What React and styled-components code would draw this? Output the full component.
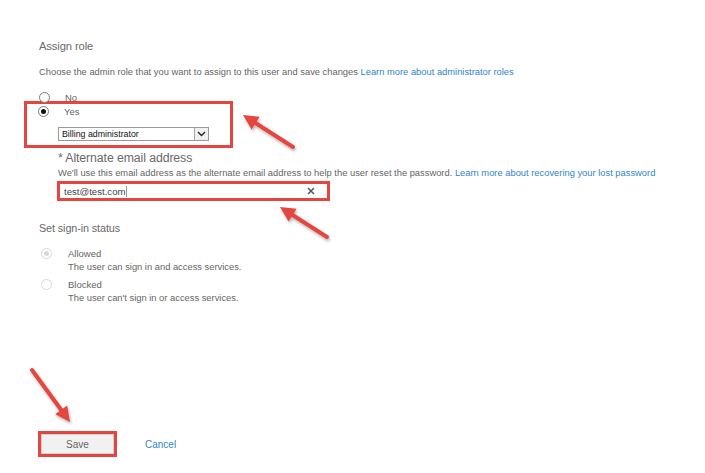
import styled, { createGlobalStyle } from "styled-components"

const GlobalStyle = createGlobalStyle`
  html, body { margin: 0; padding: 0; background: #fff; }
  body { font-family: "Liberation Sans", Arial, sans-serif; }
`

const Page = styled.div`
  position: relative;
  width: 705px;
  height: 473px;
  overflow: hidden;
  box-sizing: border-box;
  padding: 38px 0 0 39px;
  color: #666;
`

const Heading = styled.div`
  font-size: ${(p) => p.$size || "11.2px"};
  line-height: 16px;
  color: #6a6a6a;
  letter-spacing: -0.1px;
  margin-top: ${(p) => p.$top || "0"};
`

const Text = styled.div`
  font-size: 9.35px;
  line-height: 12px;
  color: #666;
  white-space: nowrap;
  margin-top: ${(p) => p.$top || "0"};
  padding-left: ${(p) => p.$indent || "0"};
`

const Link = styled.a`
  color: #2f86c9;
  text-decoration: none;
`

const Row = styled.div`
  display: flex;
  align-items: center;
  height: ${(p) => p.$h || "12px"};
  margin-top: ${(p) => p.$top || "0"};
  padding-left: ${(p) => p.$indent || "0"};
  gap: ${(p) => p.$gap || "15px"};
  font-size: 9.5px;
  color: #666;
`

const Radio = styled.span`
  box-sizing: border-box;
  width: 11px;
  height: 11px;
  border-radius: 50%;
  border: 1px solid ${(p) => (p.$disabled ? "#d6d6d6" : "#7a7a7a")};
  background: #fff;
  display: flex;
  align-items: center;
  justify-content: center;
  flex: none;

  &::after {
    content: "";
    width: 5px;
    height: 5px;
    border-radius: 50%;
    background: ${(p) => (p.$disabled ? "#d8d8d8" : "#111")};
    display: ${(p) => (p.$checked ? "block" : "none")};
  }
`

const Highlight = styled.div`
  box-sizing: border-box;
  border: 3px solid #e4463f;
  width: ${(p) => p.$w};
  margin-left: ${(p) => p.$left || "0"};
  margin-top: ${(p) => p.$top || "0"};
`

const RoleBox = styled(Highlight)`
  padding: 0 0 4px 11px;
`

const Select = styled.div`
  box-sizing: border-box;
  width: 151px;
  height: 14px;
  margin: 9px 0 0 20px;
  border: 1px solid #9a9a9a;
  background: #fff;
  display: flex;
  align-items: center;
  font-size: 8.8px;
  color: #111;
`

const SelectValue = styled.span`
  flex: 1;
  padding-left: 3px;
`

const SelectButton = styled.span`
  box-sizing: border-box;
  width: 14px;
  height: 12px;
  border-left: 1px solid #a8a8a8;
  background: #f0f0f0;
  display: flex;
  align-items: center;
  justify-content: center;
`

const EmailSection = styled.div`
  padding-left: 19px;
  margin-top: 2px;
`

const InputBox = styled(Highlight)`
  height: 20px;
  margin-left: -1px;
  display: flex;
  align-items: center;
  padding: 0 12px 0 4px;
  font-size: 9.6px;
  color: #444;
`

const InputValue = styled.span`
  flex: 1;
  display: flex;
  align-items: center;
`

const Caret = styled.span`
  width: 1px;
  height: 11px;
  background: #999;
  margin-left: 1px;
`

const SignIn = styled.div`
  margin-top: ${(p) => p.$top || "0"};
`

const Footer = styled.div`
  display: flex;
  align-items: center;
  gap: 28px;
  margin-top: 127px;
  margin-left: -1px;
`

const SaveBox = styled(Highlight)`
  height: 26px;
  padding: 0;
  display: flex;
`

const SaveButton = styled.button`
  flex: 1;
  border: 1px solid #d0d0d0;
  background: #f1f1f1;
  color: #666;
  font-family: inherit;
  font-size: 10px;
  padding: 0;
`

const Cancel = styled(Link)`
  font-size: 10px;
`

const Overlay = styled.svg`
  position: absolute;
  left: 0;
  top: 0;
  pointer-events: none;
`

function Arrow({ from, to }) {
  const [x1, y1] = from
  const [x2, y2] = to
  const dx = x2 - x1
  const dy = y2 - y1
  const len = Math.hypot(dx, dy)
  const ux = dx / len
  const uy = dy / len
  const head = 15
  const half = 7.5
  const bx = x2 - ux * head
  const by = y2 - uy * head
  const pts = [
    [x2, y2],
    [bx - uy * half, by + ux * half],
    [bx + uy * half, by - ux * half],
  ]
    .map((p) => p.join(","))
    .join(" ")
  return (
    <g filter="url(#shadow)">
      <line x1={x1} y1={y1} x2={bx + ux * 2} y2={by + uy * 2} stroke="#e4463f" strokeWidth="4" strokeLinecap="round" />
      <polygon points={pts} fill="#e4463f" />
    </g>
  )
}

export default function App() {
  return (
    <Page>
      <GlobalStyle />
      <Heading>Assign role</Heading>
      <Text $top="12px">
        Choose the admin role that you want to assign to this user and save changes{" "}
        <Link href="#">Learn more about administrator roles</Link>
      </Text>

      <Row $top="13px">
        <Radio />
        <span>No</span>
      </Row>
      <RoleBox $w="209px" $left="-15px" $top="-2px">
        <Row $h="14px">
          <Radio $checked />
          <span>Yes</span>
        </Row>
        <Select>
          <SelectValue>Billing administrator</SelectValue>
          <SelectButton>
            <svg width="9" height="6" viewBox="0 0 9 6">
              <path d="M1 1l3.5 3.5L8 1" fill="none" stroke="#222" strokeWidth="1.4" />
            </svg>
          </SelectButton>
        </Select>
      </RoleBox>

      <EmailSection>
        <Heading $size="12.3px">* Alternate email address</Heading>
        <Text $top="1px">
          We'll use this email address as the alternate email address to help the user reset the password.{" "}
          <Link href="#">Learn more about recovering your lost password</Link>
        </Text>
        <InputBox $w="273px" $top="2px">
          <InputValue>
            test@test.com
            <Caret />
          </InputValue>
          <svg width="8" height="8" viewBox="0 0 8 8">
            <path d="M1 1l6 6M7 1l-6 6" stroke="#555" strokeWidth="1.5" />
          </svg>
        </InputBox>
      </EmailSection>

      <Heading $top="19px" $size="10.8px">Set sign-in status</Heading>
      <SignIn $top="11px">
        <Row $indent="2px" $gap="16px">
          <Radio $checked $disabled />
          <span>Allowed</span>
        </Row>
        <Text $top="2px" $indent="29px">The user can sign in and access services.</Text>
        <Row $indent="2px" $gap="16px" $top="5px">
          <Radio $disabled />
          <span>Blocked</span>
        </Row>
        <Text $top="2px" $indent="29px">The user can't sign in or access services.</Text>
      </SignIn>

      <Footer>
        <SaveBox $w="79px">
          <SaveButton>Save</SaveButton>
        </SaveBox>
        <Cancel href="#">Cancel</Cancel>
      </Footer>

      <Overlay width="705" height="473">
        <defs>
          <filter id="shadow" x="-20%" y="-20%" width="140%" height="140%">
            <feDropShadow dx="1" dy="2" stdDeviation="1.5" floodColor="#000" floodOpacity="0.3" />
          </filter>
        </defs>
        <Arrow from={[293, 147]} to={[243, 115]} />
        <Arrow from={[327, 237]} to={[280, 207]} />
        <Arrow from={[32, 370]} to={[70, 422]} />
      </Overlay>
    </Page>
  )
}
